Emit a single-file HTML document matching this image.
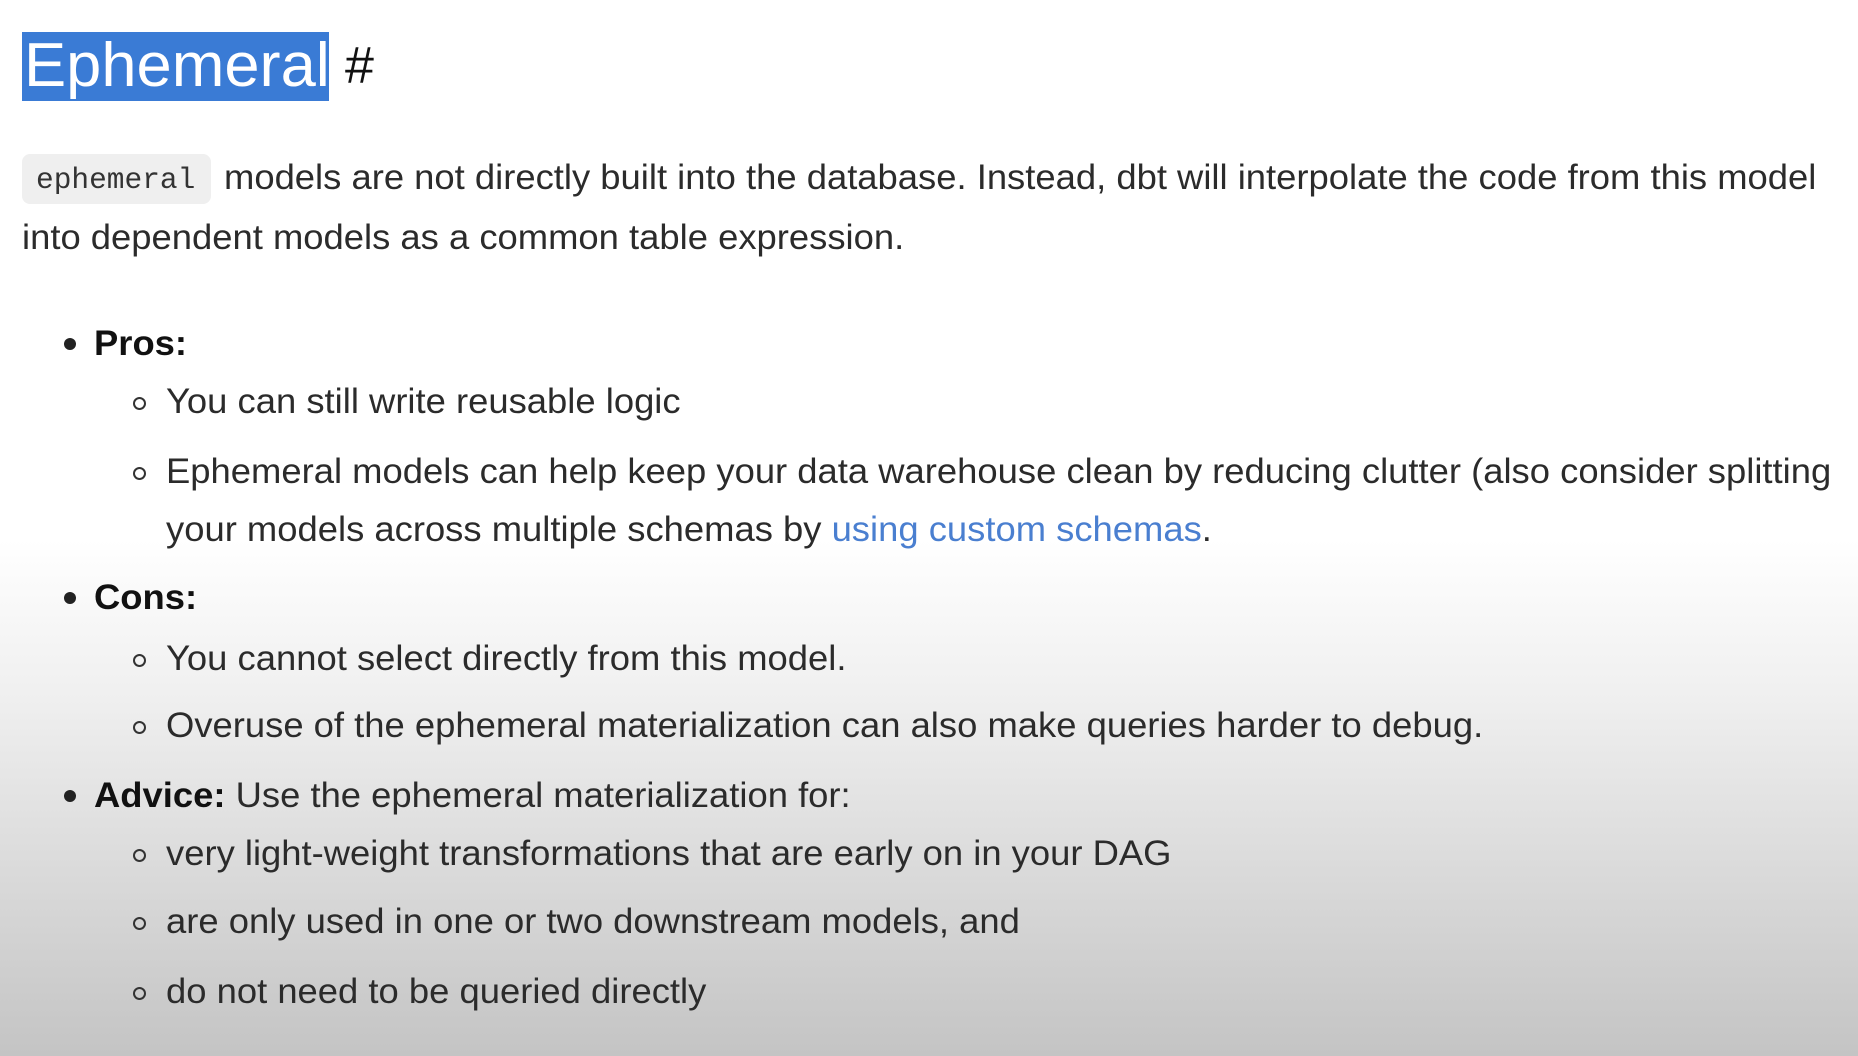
<!DOCTYPE html>
<html><head><meta charset="utf-8"><style>
html,body{margin:0;padding:0}
body{width:1858px;height:1056px;overflow:hidden;position:relative;
background:linear-gradient(to bottom,#fff 0px,#fff 540px,#efefef 700px,#d9d9d9 880px,#c4c4c4 1056px);
font-family:"Liberation Sans",sans-serif;color:#2b2b2b}
.l{position:absolute;white-space:nowrap;font-size:35px;line-height:40px;transform:scaleX(1.04);transform-origin:0 50%}
.h{position:absolute;left:22px;top:32px;height:69px;width:307px;background:#3a7bd5}
.ht{position:absolute;left:24px;top:26px;font-size:62px;line-height:80px;color:#fff;white-space:nowrap;transform:scaleX(1.02);transform-origin:0 50%}
.hash{position:absolute;left:345px;top:26px;font-size:52px;line-height:80px;color:#111}
.code{position:absolute;left:22px;top:154px;width:189px;height:50px;background:#efefef;border-radius:8px}
.ct{position:absolute;left:36px;top:160px;font-family:"Liberation Mono",monospace;font-size:29.5px;line-height:40px;color:#333}
.d{position:absolute;width:12px;height:12px;border-radius:50%;background:#222}
.c{position:absolute;width:9px;height:9px;border-radius:50%;border:2px solid #333}
b{color:#111}
a{color:#4a7fd0;text-decoration:none}
</style></head><body>
<div class="h"></div><div class="ht">Ephemeral</div><div class="hash">#</div>
<div class="code"></div><div class="ct">ephemeral</div>
<div class="l" style="left:224px;top:158px">models are not directly built into the database. Instead, dbt will interpolate the code from this model</div>
<div class="l" style="left:22px;top:218px">into dependent models as a common table expression.</div>

<div class="d" style="left:64px;top:338px"></div>
<div class="l" style="left:94px;top:324px"><b>Pros:</b></div>
<div class="c" style="left:133px;top:397px"></div>
<div class="l" style="left:166px;top:382px">You can still write reusable logic</div>
<div class="c" style="left:133px;top:467px"></div>
<div class="l" style="left:166px;top:452px">Ephemeral models can help keep your data warehouse clean by reducing clutter (also consider splitting</div>
<div class="l" style="left:166px;top:510px">your models across multiple schemas by <a>using custom schemas</a>.</div>

<div class="d" style="left:64px;top:592px"></div>
<div class="l" style="left:94px;top:578px"><b>Cons:</b></div>
<div class="c" style="left:133px;top:654px"></div>
<div class="l" style="left:166px;top:639px">You cannot select directly from this model.</div>
<div class="c" style="left:133px;top:721px"></div>
<div class="l" style="left:166px;top:706px">Overuse of the ephemeral materialization can also make queries harder to debug.</div>

<div class="d" style="left:64px;top:790px"></div>
<div class="l" style="left:94px;top:776px"><b>Advice:</b> Use the ephemeral materialization for:</div>
<div class="c" style="left:133px;top:849px"></div>
<div class="l" style="left:166px;top:834px">very light-weight transformations that are early on in your DAG</div>
<div class="c" style="left:133px;top:917px"></div>
<div class="l" style="left:166px;top:902px">are only used in one or two downstream models, and</div>
<div class="c" style="left:133px;top:987px"></div>
<div class="l" style="left:166px;top:972px">do not need to be queried directly</div>
</body></html>
